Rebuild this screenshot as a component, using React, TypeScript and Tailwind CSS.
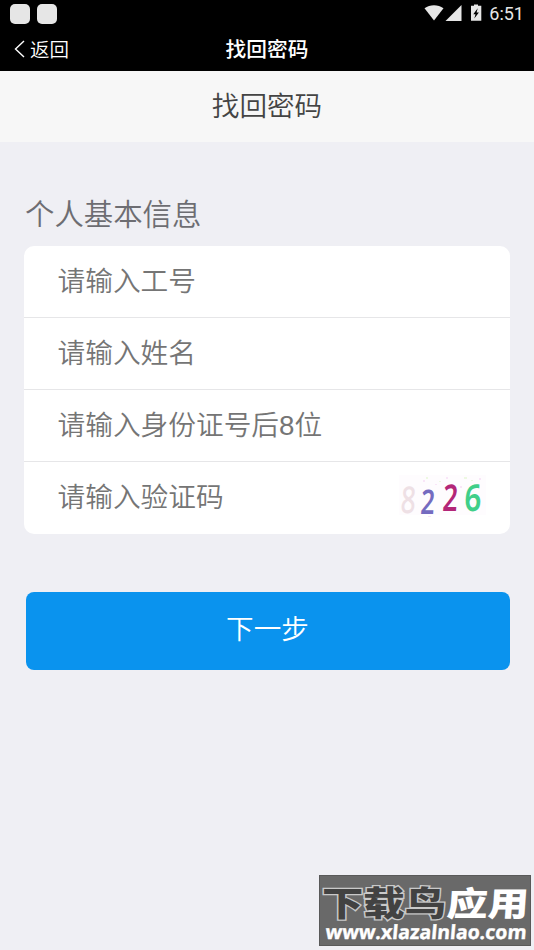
type Field = {
  name: string;
  placeholder: string;
};

const fields: Field[] = [
  { name: "jobNo", placeholder: "请输入工号" },
  { name: "realName", placeholder: "请输入姓名" },
  { name: "idTail", placeholder: "请输入身份证号后8位" },
  { name: "captcha", placeholder: "请输入验证码" },
];

function StatusBar() {
  return (
    <div className="flex h-[27px] items-center justify-between pr-[10px] pl-[10px]">
      <div className="flex gap-[7px]">
        <div className="size-5 rounded-[5px] bg-[#e6e6e6]" />
        <div className="size-5 rounded-[5px] bg-[#e6e6e6]" />
      </div>
      <div className="flex items-center text-[#e6e6e6]">
        <svg width="62" height="18" viewBox="0 0 62 18" fill="currentColor" className="-mt-px">
          <path d="M0.500 4.200C6 0.200 14 0.200 19.500 4.200L10 16.500Z" />
          <path d="M37.500 1V17H21.500Z" />
          <path
            fillRule="evenodd"
            d="M50 0.500h4v1.300h3.300v14.900H47V1.800h3ZM53.700 4.200l-4.400 6h2.200l-1.200 4.300 4.600-6h-2.300Z"
          />
        </svg>
        <span className="mt-px ml-[3px] font-[Roboto] text-[18px] leading-none">6:51</span>
      </div>
    </div>
  );
}

function NavBar() {
  return (
    <div className="grid h-11 grid-cols-[1fr_auto_1fr] items-center pt-[3px] text-white">
      <button type="button" className="flex items-center pl-[14px] text-[19.5px] leading-none">
        <svg width="11" height="18" viewBox="0 0 11 18" fill="none" stroke="currentColor" strokeWidth="1.4" className="-mt-[3px]">
          <path d="M10 1 1.500 9l8.500 8" />
        </svg>
        <span className="ml-[5px] font-[350]">返回</span>
      </button>
      <span className="text-[20.7px] leading-none font-medium">找回密码</span>
    </div>
  );
}

function Captcha() {
  return (
    <svg width="87" height="72" viewBox="0 0 87 72" className="shrink-0" fontFamily="Noto Sans, sans-serif">
      <rect y="13" width="87" height="40" fill="#fefcfe" />
      <g fill="#f9e6f8">
        <rect x="24" y="18" width="2" height="2" />
        <rect x="36" y="22" width="2" height="1" />
        <rect x="47" y="15" width="2" height="2" />
        <rect x="61" y="24" width="2" height="2" />
        <rect x="29" y="54" width="3" height="1" />
        <rect x="80" y="16" width="2" height="2" />
      </g>
      <g fill="#edf9e2">
        <rect x="27" y="15" width="2" height="2" />
        <rect x="40" y="19" width="2" height="1" />
        <rect x="65" y="15" width="3" height="2" />
        <rect x="72" y="18" width="2" height="1" />
      </g>
      <text transform="translate(1 51) skewX(-4)" fontSize="37" fontWeight="500" fill="#eee0e5" textLength="15" lengthAdjust="spacingAndGlyphs">8</text>
      <text transform="translate(21 51.500) skewX(-4)" fontSize="34" fontWeight="600" fill="#746bc0" textLength="14" lengthAdjust="spacingAndGlyphs">2</text>
      <text transform="translate(43 49) skewX(-4)" fontSize="37" fontWeight="600" fill="#b32678" textLength="15" lengthAdjust="spacingAndGlyphs">2</text>
      <text transform="translate(65 49) skewX(-2)" fontSize="37" fontWeight="600" fill="#40cf89" textLength="17" lengthAdjust="spacingAndGlyphs">6</text>
    </svg>
  );
}

function Watermark() {
  return (
    <div className="absolute right-[3px] bottom-1 h-[71px] w-[212px] border border-[#595959] bg-[#696969]">
      <svg width="210" height="69" viewBox="0 0 210 69" fontFamily="Noto Sans CJK SC, sans-serif" fontWeight="900">
        <text
          transform="translate(2 40) scale(1 .84)"
          fontSize="40"
          textLength="124"
          lengthAdjust="spacingAndGlyphs"
          fill="#424242"
          stroke="#c9c9c9"
          strokeWidth="3"
          paintOrder="stroke"
        >
          下载鸟
        </text>
        <text
          transform="translate(126 40) skewX(-4) scale(1 .84)"
          fontSize="40"
          textLength="82"
          lengthAdjust="spacingAndGlyphs"
          fill="#fff"
        >
          应用
        </text>
        <text
          transform="translate(5 63) skewX(-5)"
          fontFamily="Open Sans, sans-serif"
          fontSize="19.5"
          fontWeight="700"
          textLength="201"
          lengthAdjust="spacingAndGlyphs"
          fill="#fff"
          stroke="#fff"
          strokeWidth="0.4"
        >
          www.xlazalnlao.com
        </text>
      </svg>
    </div>
  );
}

export default function App() {
  return (
    <div className="relative h-[950px] w-[534px] overflow-hidden bg-[#efeff4] font-['Roboto','Noto_Sans_CJK_SC',sans-serif]">
      <header className="bg-black">
        <StatusBar />
        <NavBar />
      </header>

      <div className="flex h-[71px] items-center justify-center bg-[#f7f7f7] text-[27.6px] leading-none text-[#444]">
        <h1 className="mt-px font-[350]">找回密码</h1>
      </div>

      <main className="px-[25px] pt-[51px]">
        <h2 className="h-[53px] text-[29.4px] leading-[44px] font-[350] text-[#6d6d72]">个人基本信息</h2>

        <form>
          <div className="-mr-px -ml-px overflow-hidden rounded-[10px] bg-white">
            {fields.map((field) => (
              <div
                key={field.name}
                className="flex h-[72px] items-center border-b border-[#e6e6e8] pr-[24px] pl-[33.5px] last:border-b-0"
              >
                <input
                  name={field.name}
                  placeholder={field.placeholder}
                  className="h-12 min-w-0 flex-1 bg-transparent font-['Liberation_Sans','Noto_Sans_CJK_SC',sans-serif] text-[27.7px] font-[350] outline-none placeholder:text-[#757575]"
                />
                {field.name === "captcha" && <Captcha />}
              </div>
            ))}
          </div>

          <button
            type="button"
            className="mt-[58px] ml-[0.5px] h-[78px] w-full rounded-lg bg-[#0a93ee] pb-[2px] text-[27.6px] leading-none font-[350] text-white"
          >
            下一步
          </button>
        </form>
      </main>

      <Watermark />
    </div>
  );
}
